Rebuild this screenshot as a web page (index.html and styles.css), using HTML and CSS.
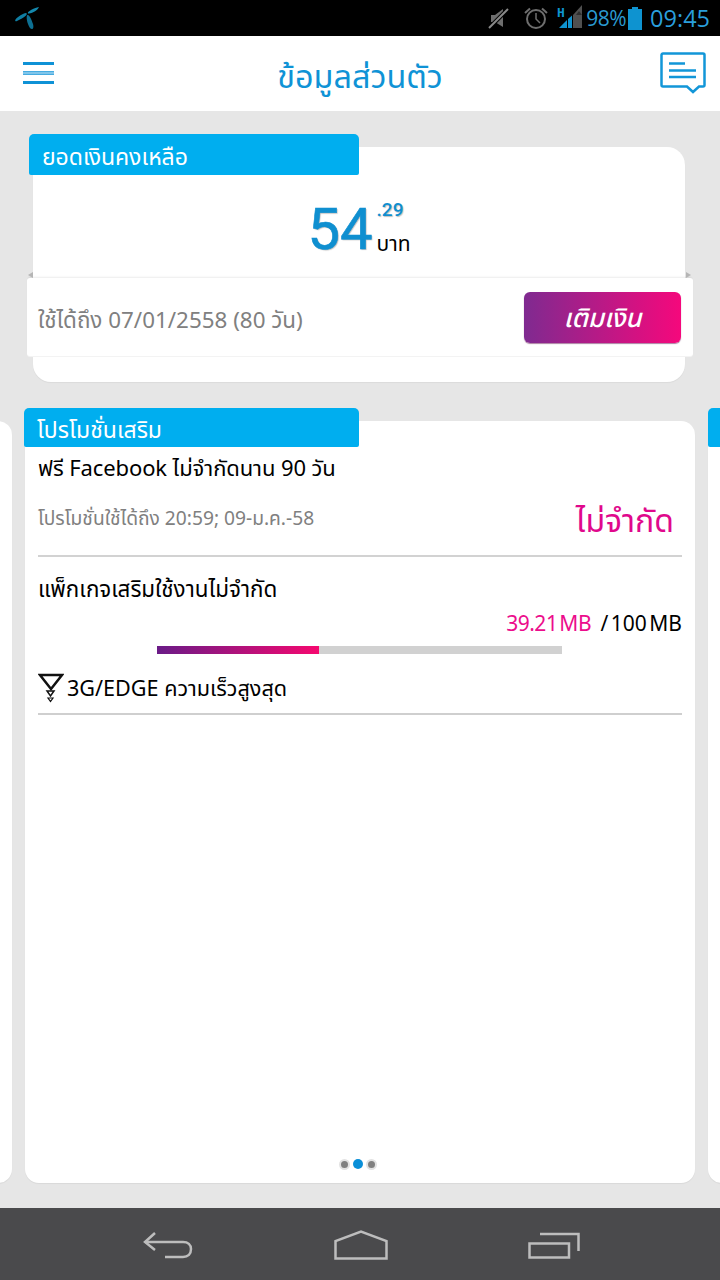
FILE: index.html
```html
<!DOCTYPE html>
<html lang="th">
<head>
    <meta charset="UTF-8">
    <meta name="viewport" content="width=device-width, initial-scale=1.0">
    <title>ข้อมูลส่วนตัว</title>
    <link rel="stylesheet" href="styles.css">
</head>
<body>
    <div class="statusbar">
        <svg class="logo" width="26" height="24" viewBox="0 0 26 24">
            <path d="M25 1C24 4 19 7 15 7.500C13.500 7.600 13.400 6.300 14.800 5.400C17.500 3.400 21 1.800 25 1Z" fill="#1488ad"/>
            <path d="M12 7C9 7.300 4 10.500 1.500 13.500C.6 15 1.700 15.700 3 15C6 13.500 10 11.500 12 9.500C13 8.500 13 7 12 7Z" fill="#0f7ea3"/>
            <path d="M13.500 9C12.300 9.500 12.500 14 14 18C15 21 16.500 23 18 23C19.500 23 19.700 20.500 19 18C18 14.500 15.500 8.500 13.500 9Z" fill="#0d6f92"/>
        </svg>
        <div class="status-right">
            <svg class="st-mute" width="22" height="24" viewBox="0 0 22 24">
                <path d="M3 9H7L15 3V21L7 16H3Z" fill="#6e6e6e"/>
                <path d="M1 22L20 3" stroke="#000" stroke-width="4"/>
                <path d="M1 22L20 3" stroke="#8a8a8a" stroke-width="2"/>
            </svg>
            <svg class="st-alarm" width="24" height="24" viewBox="0 0 24 24" fill="none" stroke="#6e6e6e" stroke-width="2">
                <circle cx="12" cy="13" r="9"/>
                <path d="M12 7V13L16 17" stroke-width="1.500"/>
                <path d="M1 7L6 2.500M23 7L18 2.500"/>
            </svg>
            <svg class="st-signal" width="27" height="24" viewBox="0 0 27 24">
                <text x="0" y="12" class="st-h">H</text>
                <path d="M2 23L10 15V23Z" fill="#0e93d0"/>
                <path d="M11 14L15 10.500V23H11Z" fill="#0e93d0"/>
                <path d="M16 10L25 0V23H16Z" fill="#505050"/>
                <path d="M19 10L22 6L25 10Z" fill="#2e2e2e"/>
            </svg>
            <span class="st-pct">98%</span>
            <svg class="st-batt" width="14" height="23" viewBox="0 0 14 23">
                <path d="M4 0H10V2H14V23H0V2H4Z" fill="#0e93d0"/>
            </svg>
            <span class="st-time">09:45</span>
        </div>
    </div>

    <div class="topbar">
        <div class="hamburger"><span></span><span></span><span></span></div>
        <h1 class="title">ข้อมูลส่วนตัว</h1>
        <svg class="chat" width="46" height="42" viewBox="0 0 46 42" fill="none" stroke="#1296d8">
            <path d="M3 1.500H43A1.500 1.500 0 0 1 44.500 3V33A1.500 1.500 0 0 1 43 34.500H39L33 40L27 34.500H3A1.500 1.500 0 0 1 1.500 33V3A1.500 1.500 0 0 1 3 1.500Z" stroke-width="2.500"/>
            <path d="M9 11.500H25M9 18.500H36M9 25H36" stroke-width="2.600"/>
        </svg>
    </div>

    <main class="content">
        <section class="balance-card">
            <div class="tab balance-tab">ยอดเงินคงเหลือ</div>
            <div class="amount">
                <span class="amount-big">54</span>
                <div class="amount-side">
                    <span class="amount-dec">.29</span>
                    <span class="amount-unit">บาท</span>
                </div>
            </div>
            <div class="valid-strip">
                <span class="valid-text">ใช้ได้ถึง 07/01/2558 (80 วัน)</span>
                <button class="topup">เติมเงิน</button>
            </div>
        </section>

        <div class="carousel">
            <div class="promo-card side-card prev-card"></div>
            <section class="promo-card">
                <div class="tab promo-tab">โปรโมชั่นเสริม</div>
                <div class="promo-row">
                    <div class="promo-name">ฟรี Facebook ไม่จำกัดนาน 90 วัน</div>
                    <div class="promo-meta">
                        <span class="promo-date">โปรโมชั่นใช้ได้ถึง 20:59; 09-ม.ค.-58</span>
                        <span class="promo-unlimited">ไม่จำกัด</span>
                    </div>
                </div>
                <div class="package">
                    <div class="promo-name package-name">แพ็กเกจเสริมใช้งานไม่จำกัด</div>
                    <div class="usage"><span class="used">39.21 MB</span> <span class="total">/ 100 MB</span></div>
                    <div class="bar"><div class="bar-fill" style="width:40%"></div></div>
                    <div class="speed">
                        <svg width="26" height="30" viewBox="0 0 26 30" fill="none" stroke="#111">
                            <path d="M2 2H24L13 16Z" stroke-width="2.500"/>
                            <path d="M9 18H16L12.500 23Z" stroke-width="1.500"/>
                            <path d="M10 25H15L12.500 28.500Z" stroke-width="1.200"/>
                        </svg>
                        <span>3G/EDGE ความเร็วสูงสุด</span>
                    </div>
                </div>
                <div class="dots"><i></i><i class="on"></i><i></i></div>
            </section>
            <div class="promo-card side-card next-card">
                <div class="tab next-tab"></div>
            </div>
        </div>
    </main>

    <div class="navbar">
        <svg width="50" height="28" viewBox="0 0 50 28" fill="none" stroke="#bdbdbd" stroke-width="2.500">
            <path d="M12 2L2 11L12 19"/>
            <path d="M2 11H40C45 11 48 14 48 18C48 23 45 26 40 26H22"/>
        </svg>
        <svg width="54" height="30" viewBox="0 0 54 30" fill="none" stroke="#bdbdbd" stroke-width="2.500">
            <path d="M1.500 28.500V11L27 1.500L52.500 11V28.500Z"/>
        </svg>
        <svg width="52" height="27" viewBox="0 0 52 27" fill="none" stroke="#bdbdbd" stroke-width="2.500">
            <path d="M12 2H50.500V19"/>
            <path d="M1.500 11.500H41V25.500H1.500Z"/>
        </svg>
    </div>
</body>
</html>
```

FILE: styles.css
```css
*{margin:0;padding:0;box-sizing:border-box;}
html,body{width:100%;height:100%;}
body{
    width:720px;
    height:1280px;
    overflow:hidden;
    display:flex;
    flex-direction:column;
    background:#e6e6e6;
    font-family:"Noto Sans Thai","Roboto","Noto Sans","DejaVu Sans",sans-serif;
    color:#000;
}

/* status bar */
.statusbar{
    height:36px;
    background:#000;
    display:flex;
    align-items:center;
    justify-content:space-between;
    padding:0 10px 0 14px;
    flex:none;
}
.status-right{display:flex;align-items:center;}
.st-mute{margin-right:14px;}
.st-alarm{margin-right:9px;}
.st-signal{margin:-2px 2px 0 0;}
.st-h{font:bold 13px "DejaVu Sans Mono",monospace;fill:#0e93d0;}
.st-pct{font-size:21px;color:#2a9ad0;font-family:"Open Sans",sans-serif;letter-spacing:-.5px;}
.st-batt{margin:0 8px 0 2px;}
.st-time{font-size:23.5px;color:#2a9fdc;font-family:"Open Sans",sans-serif;}

/* top bar */
.topbar{
    height:75px;
    background:#fff;
    display:flex;
    align-items:center;
    justify-content:space-between;
    padding:0 14px 0 23px;
    flex:none;
}
.hamburger{width:31px;display:flex;flex-direction:column;gap:6px;margin-top:-1px;}
.hamburger span{display:block;height:3px;background:#0f92d6;}
.hamburger span:nth-child(2){height:4px;background:linear-gradient(#2a9fdc,#86c8eb 40%,#86c8eb 60%,#2a9fdc);}
.title{font-size:32.4px;font-weight:400;color:#0f93d6;margin:10px 0 0 6px;}
.chat{margin-top:-1px;}

/* main */
.content{flex:1;overflow:hidden;padding-top:36px;}

.tab{
    position:absolute;
    background:#00aeef;
    color:#fff;
    border-radius:5px 5px 2px 2px;
    font-size:23px;
    line-height:41px;
    white-space:nowrap;
}

.balance-card{
    position:relative;
    height:235px;
    margin:0 35px 0 33px;
    background:#fff;
    border-radius:18px;
    box-shadow:0 1px 1px rgba(0,0,0,.05);
}
.balance-tab{left:-4px;top:-13px;width:330px;height:41px;padding:4px 0 0 13px;letter-spacing:-.05px;}
.amount{display:flex;justify-content:center;padding-top:47px;height:131px;}
.amount-big{font-size:58px;font-weight:400;color:#0f8fd0;line-height:70px;-webkit-text-stroke:.6px #0f8fd0;text-shadow:1px 1px 1px rgba(0,0,0,.25);font-family:"Roboto",sans-serif;}
.amount-side{display:flex;flex-direction:column;margin-left:4px;}
.amount-dec{font-size:19px;font-weight:500;color:#0f8fd0;line-height:32px;text-shadow:1px 1px 1px rgba(0,0,0,.25);font-family:"Roboto",sans-serif;}
.amount-unit{font-size:21px;line-height:38px;}

.valid-strip{
    position:relative;
    height:78px;
    margin:0 -8px 0 -6px;
    background:#fff;
    border-radius:3px;
    box-shadow:0 -2px 2px -1px rgba(0,0,0,.08),0 1px 0 #f3f3f3;
    display:flex;
    align-items:center;
    justify-content:space-between;
    padding:0 12px 0 11px;
}
/* little fold on both ends of the strip */
.valid-strip::before,.valid-strip::after{
    content:"";
    position:absolute;
    top:-6px;
    border-style:solid;
    border-width:3px 5px;
    border-color:transparent;
}
.valid-strip::before{left:1px;border-left-width:0;border-right-color:#b5b5b5;}
.valid-strip::after{right:2px;border-right-width:0;border-left-color:#b5b5b5;}
.valid-text{font-size:22.4px;color:#808080;padding-top:7px;}
.topup{
    width:157px;
    height:51px;
    margin-top:1px;
    border:0;
    border-radius:6px;
    background:linear-gradient(90deg,#7f2a90,#f5087c);
    box-shadow:0 1px 1px rgba(90,0,70,.5);
    color:#fff;
    font:italic 500 26px "Noto Sans Thai","Roboto",sans-serif;
    padding-top:3px;
}

/* carousel */
.carousel{
    display:flex;
    gap:13px;
    margin:39px 0 0 -658px;
}
.promo-card{
    position:relative;
    flex:none;
    width:670px;
    height:762px;
    background:#fff;
    border-radius:14px;
    box-shadow:0 1px 1px rgba(0,0,0,.06);
    padding:29px 13px 0;
}
.promo-tab{left:-1px;top:-13px;width:335px;height:39px;line-height:39px;padding:4px 0 0 13px;}
.next-tab{left:0;top:-13px;width:335px;height:39px;}
.promo-row{height:107px;border-bottom:2px solid #d2d2d2;}
.promo-name{font-size:22px;line-height:40px;letter-spacing:-.1px;}
.package-name{font-size:22.4px;letter-spacing:0;}
.promo-meta{display:flex;justify-content:space-between;align-items:center;margin-top:9px;padding-right:8px;}
.promo-date{font-size:19.2px;color:#808080;margin-top:-6px;}
.promo-unlimited{font-size:32px;color:#e0088c;line-height:46px;}
.package{border-bottom:2px solid #cfcfcf;height:158px;padding-top:13px;}
.usage{text-align:right;font-size:21px;line-height:28px;margin-top:1px;word-spacing:-3px;}
.used{color:#ec0d8c;margin-right:7px;letter-spacing:-.5px;}
.bar{width:405px;height:8px;margin:7px 0 0 119px;background:#d1d1d1;}
.bar-fill{height:8px;background:linear-gradient(90deg,#6a1b87,#f5086f);}
.speed{display:flex;align-items:center;gap:3px;margin-top:17px;font-size:21.6px;height:36px;}
.speed svg{margin-top:-2px;}
.dots{
    position:absolute;
    left:0;
    right:0;
    bottom:13px;
    display:flex;
    justify-content:center;
    gap:3px;
    padding-right:5px;
}
.dots i{width:11px;height:11px;border-radius:50%;background:#808080;border:2px solid #e2e2e2;}
.dots i.on{width:10px;height:10px;background:#0a8fd8;border:0;}

/* nav bar */
.navbar{
    height:72px;
    flex:none;
    background:#4a4a4c;
    display:flex;
    align-items:center;
    justify-content:space-between;
    padding:2px 140px 0 143px;
}
```
